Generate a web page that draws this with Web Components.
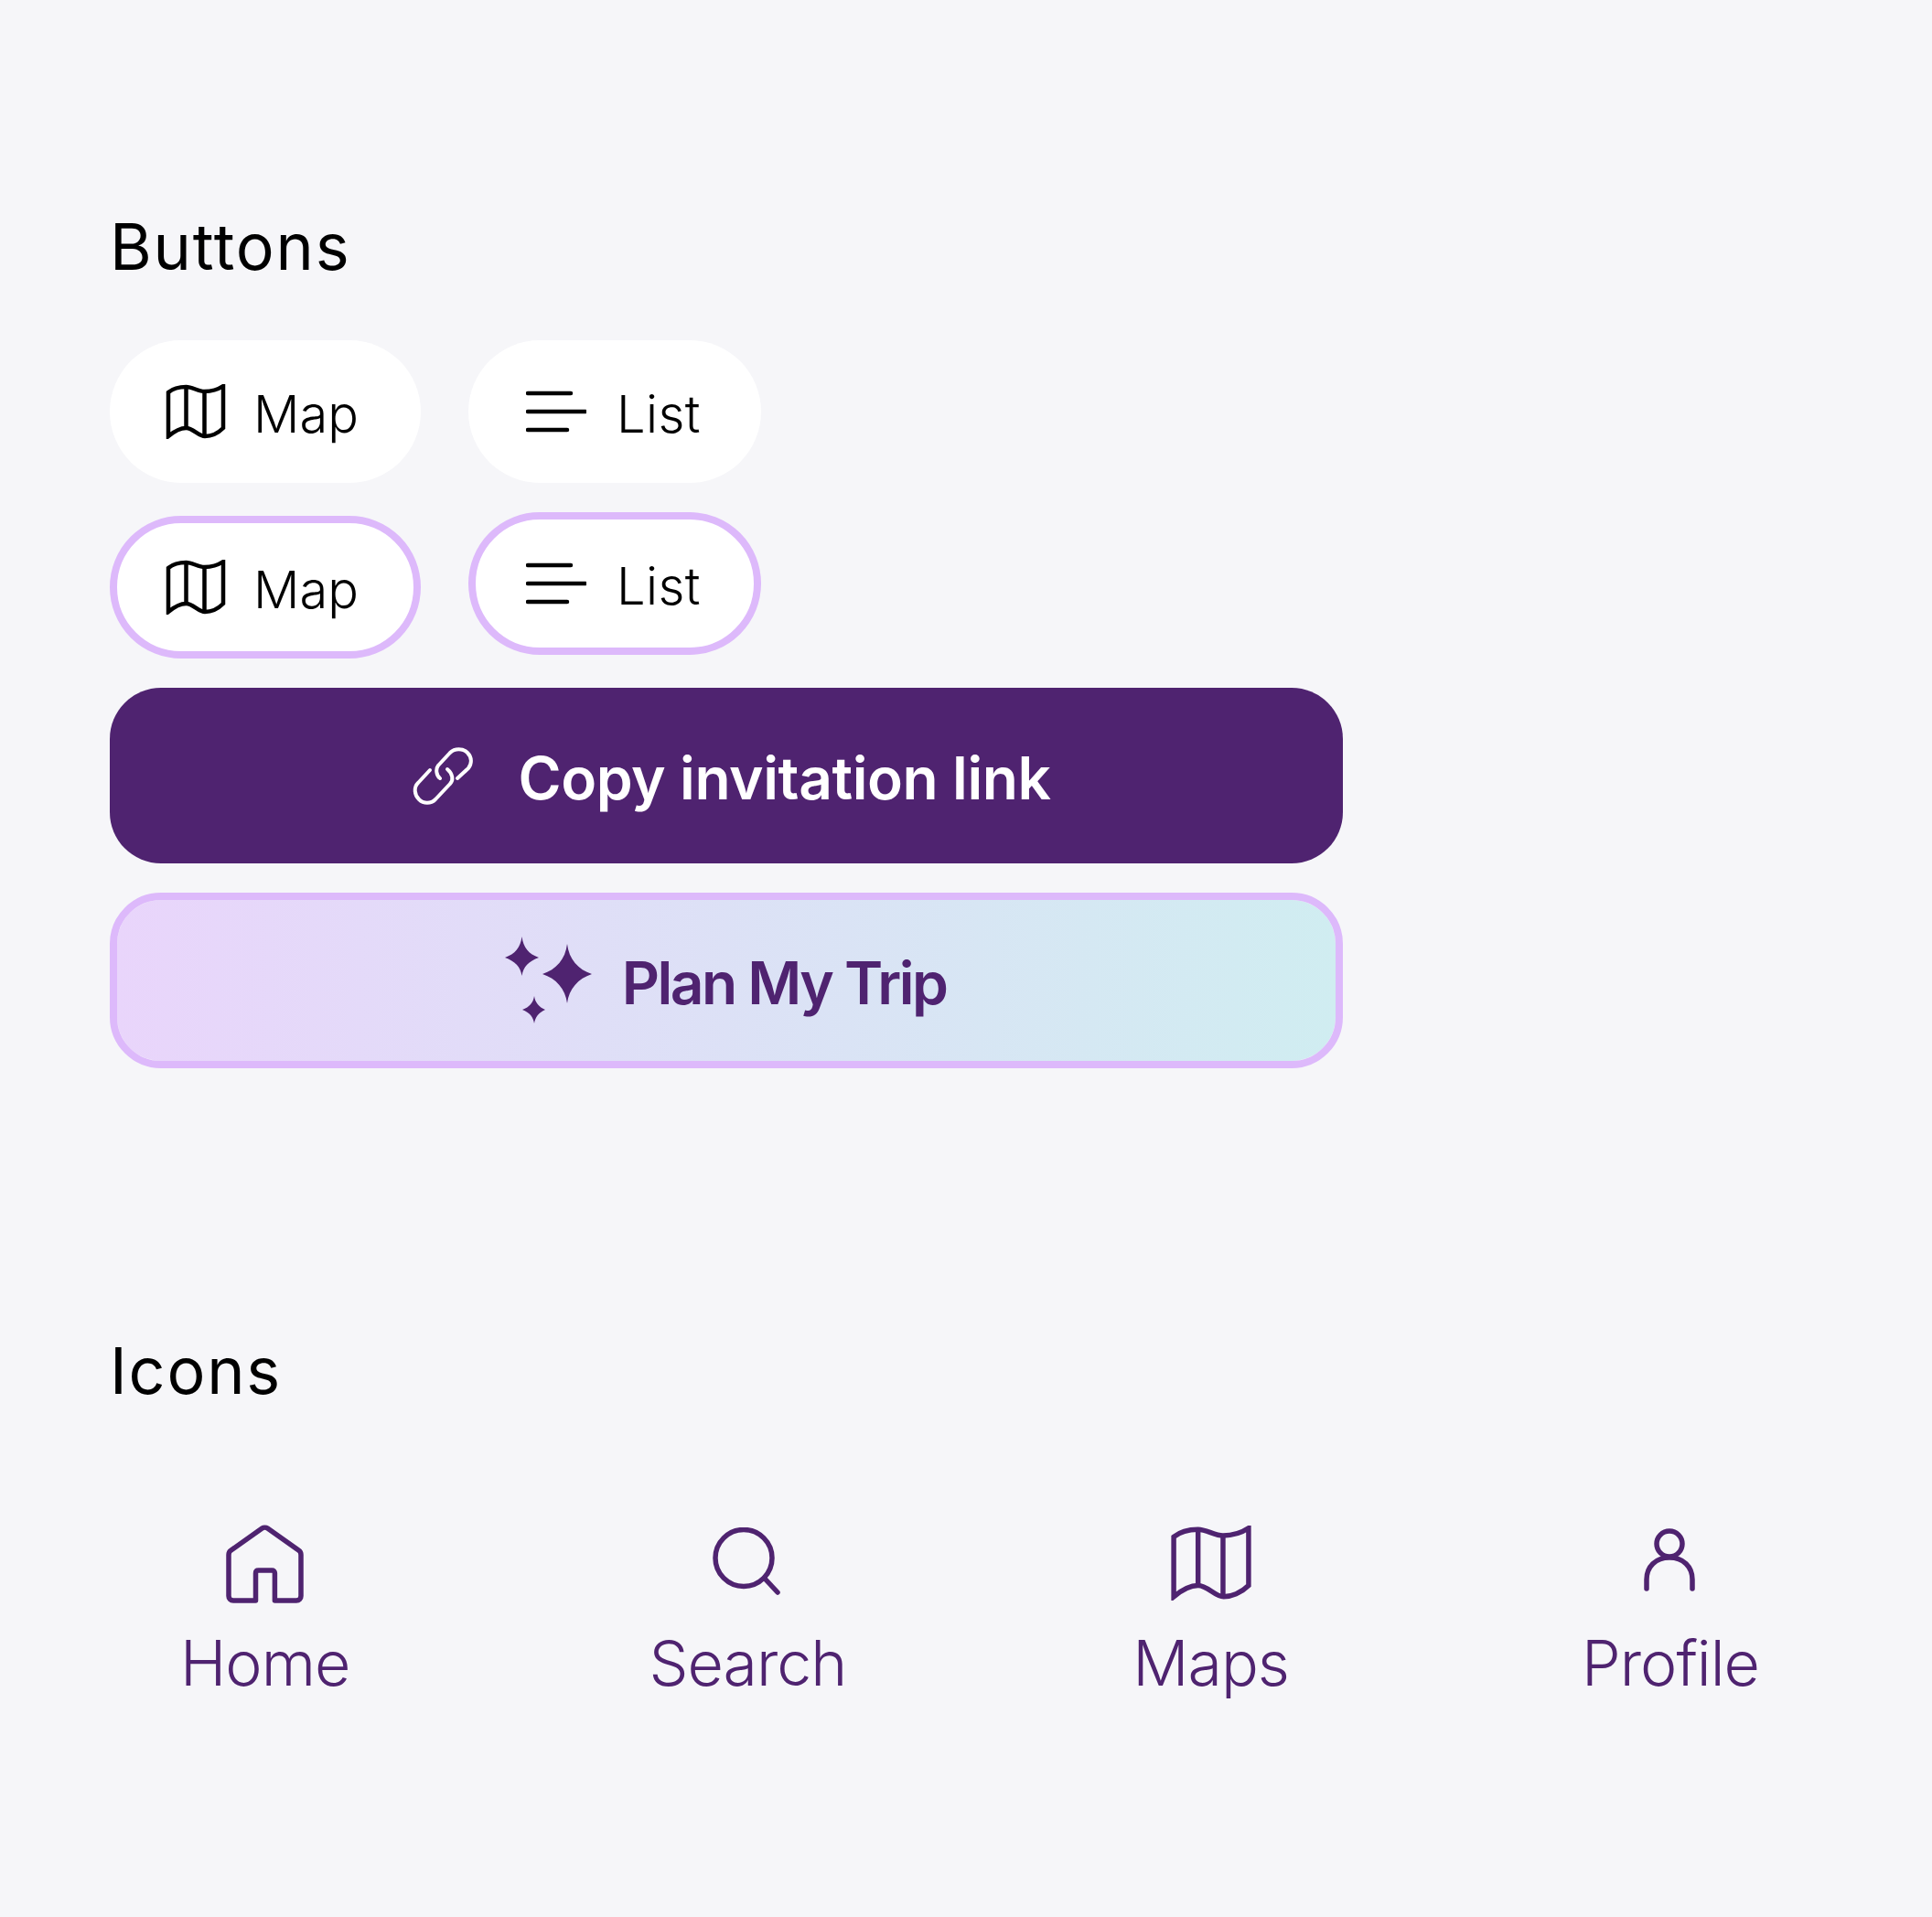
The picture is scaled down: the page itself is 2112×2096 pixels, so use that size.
<!DOCTYPE html>
<html><head><meta charset="utf-8"><title>Components</title>
<style>
html,body{margin:0;padding:0;background:#f6f6f9}
body{width:2112px;height:2096px;overflow:hidden;font-family:"Inter","Liberation Sans",sans-serif}
</style></head><body>
<ui-page>
  <ui-section style="--pt:235px;--mb:69px" heading="Buttons">
    <ui-row>
      <ui-pill w="340" pl="61" gap="30"><ui-icon slot="icon" name="map"></ui-icon>Map</ui-pill>
      <ui-pill w="320" gap="33" pl="63" ls=".4"><ui-icon slot="icon" name="list"></ui-icon>List</ui-pill>
    </ui-row>
    <ui-row>
      <ui-pill w="340" pl="61" gap="30" outlined style="margin-top:4px"><ui-icon slot="icon" name="map"></ui-icon>Map</ui-pill>
      <ui-pill w="320" gap="33" pl="63" ls=".4" outlined><ui-icon slot="icon" name="list"></ui-icon>List</ui-pill>
    </ui-row>
    <ui-cta kind="solid"><ui-icon slot="icon" name="link"></ui-icon>Copy invitation link</ui-cta>
    <ui-cta kind="magic"><ui-icon slot="icon" name="sparkles"></ui-icon>Plan My Trip</ui-cta>
  </ui-section>
  <ui-section style="--pt:296px;--mb:135px" heading="Icons">
    <ui-tabs>
      <ui-tab><ui-icon slot="icon" name="home"></ui-icon>Home</ui-tab>
      <ui-tab style="margin-left:7px;margin-right:-7px"><ui-icon slot="icon" name="search" style="margin-top:3px"></ui-icon>Search</ui-tab>
      <ui-tab><ui-icon slot="icon" name="bigmap" style="margin-top:1px"></ui-icon>Maps</ui-tab>
      <ui-tab><ui-icon slot="icon" name="profile" style="margin-top:4px"></ui-icon>Profile</ui-tab>
    </ui-tabs>
  </ui-section>
</ui-page>
<script>
const MAP='<path d="M14 29C20 24 27 23 33.5 23C40 23 47 28 53.5 28C60 28 68 26 74 22V68C68 74 60 77 54 77C47 77 41 68 33.5 68C26 68 20 72 14 77Z"/><path d="M33.5 23V68M53.5 28V77"/>';
const ICONS={
 map:{w:66,h:60,vb:'11 20 66 60',sw:4.5,miter:1,b:MAP},
 bigmap:{w:90,h:82,vb:'11 20 66 60',sw:4,miter:1,b:MAP},
 list:{w:66,h:48,vb:'0 0 66 48',sw:4.5,b:'<path d="M2 4H49M2 24H65M2 44H45"/>'},
 link:{w:80,h:70,vb:'20 24 80 70',sw:4,b:'<path d="M62 62C58 59 57 52 60 48L73 34C78 29 87 29 92 34C97 39 97 46 93 51L81 62"/><path d="M51 53L38 67C33 72 34 80 39 85C44 90 52 90 57 85L73 68C77 64 76 57 70 52"/>'},
 sparkles:{w:110,h:100,vb:'14 12 110 100',fill:1,b:'<path d="M88 22C90 39 100 50 115 55C100 60 90 71 88 87C86 71 76 60 61 55C76 50 86 39 88 22Z"/><path d="M38.500 14C40 26 46 33 57 37C46 41 40 47 38.500 57C37 47 31 41 20 37C31 33 37 26 38.500 14Z"/><path d="M52 79C53 86 57 91 64 94C57 97 53 102 52 109C51 102 47 97 39 94C47 91 51 86 52 79Z"/>'},
 home:{w:85,h:86,vb:'0 0 85 86',sw:5.5,b:'<path d="M32.500 83H8C5 83 3 81 3 78V33C3 31 4 29 5.600 28L39.500 4C41 3 44 3 45.500 4L79.400 28C81 29 82 31 82 33V78C82 81 80 83 77 83H53.400V53C53.400 51 52 50 50.400 50H35.500C33.500 50 32.500 51 32.500 53Z"/>'},
 search:{w:76,h:76,vb:'0 0 76 76',sw:5.5,b:'<circle cx="34" cy="33.500" r="31"/><path d="M58 57L71 71"/>'},
 profile:{w:60,h:70,vb:'0 0 60 70',sw:5.500,b:'<circle cx="29" cy="17" r="14"/><path d="M4 66V56C4 42 14 32 29 32C44 32 54 42 54 56V66"/>'}
};
class UiIcon extends HTMLElement{connectedCallback(){const i=ICONS[this.getAttribute('name')];const r=this.attachShadow({mode:'open'});
 r.innerHTML=`<style>:host{display:block;width:${i.w}px;height:${i.h}px;flex:none}svg{display:block}</style><svg xmlns="http://www.w3.org/2000/svg" width="${i.w}" height="${i.h}" viewBox="${i.vb}" fill="${i.fill?'currentColor':'none'}" ${i.fill?'':`stroke="currentColor" stroke-width="${i.sw}" stroke-linecap="${i.miter?'butt':'round'}" stroke-linejoin="${i.miter?'miter':'round'}"`}>${i.b}</svg>`;}}
class UiPage extends HTMLElement{constructor(){super();this.attachShadow({mode:'open'}).innerHTML=`<style>:host{display:block;padding:0 120px 0 120px;color:#000}</style><slot></slot>`;}}
class UiSection extends HTMLElement{connectedCallback(){this.attachShadow({mode:'open'}).innerHTML=`<style>:host{display:block;padding-top:var(--pt)}
 h2{margin:0 0 var(--mb);font:400 70px/1 "Inter",sans-serif;letter-spacing:1.800px;color:#000;height:68px}
 .b{display:flex;flex-direction:column;gap:32px}</style><h2>${this.getAttribute('heading')}</h2><div class="b"><slot></slot></div>`;}}
class UiRow extends HTMLElement{constructor(){super();this.attachShadow({mode:'open'}).innerHTML=`<style>:host{display:flex;gap:52px;align-items:flex-start}</style><slot></slot>`;}}
class UiPill extends HTMLElement{connectedCallback(){const w=this.getAttribute('w'),g=this.getAttribute('gap')||32,pl=+this.getAttribute('pl')||60,o=this.hasAttribute('outlined'),ls=this.getAttribute('ls')||0;
 this.attachShadow({mode:'open'}).innerHTML=`<style>:host{display:block;flex:none;width:${w}px;height:156px;box-sizing:border-box;border-radius:78px;background:#fff;${o?'border:8px solid #ddb9fb;':''}}
 ::slotted(ui-icon){margin-bottom:6px}
 .i{height:100%;box-sizing:border-box;display:flex;align-items:center;gap:${g}px;padding-top:6px;padding-left:${pl-(o?8:0)}px;font:350 56px/1 "Inter",sans-serif;letter-spacing:${ls}px;color:#000}</style><div class="i"><slot name="icon"></slot><slot></slot></div>`;}}
class UiCta extends HTMLElement{connectedCallback(){const k=this.getAttribute('kind');const s=k==='solid';
 this.attachShadow({mode:'open'}).innerHTML=`<style>:host{display:block;width:1348px;height:192px;box-sizing:border-box;border-radius:56px;${s?'background:#4f2370;color:#fff;':'background:linear-gradient(90deg,#e9d5fb,#d0edf1);background-clip:padding-box;color:#4f2370;'}}
 :host([kind=magic]){border:8px solid #ddb9fb}
 ::slotted(ui-icon){margin-bottom:6px}
 .i{height:100%;box-sizing:border-box;display:flex;align-items:center;justify-content:center;padding-top:6px;padding-right:${s?0:8}px;gap:${s?47:24}px;font:600 64px/1 "Inter",sans-serif;letter-spacing:${s?-.4:-2.5}px}</style><div class="i"><slot name="icon"></slot><slot></slot></div>`;}}
class UiTabs extends HTMLElement{constructor(){super();this.attachShadow({mode:'open'}).innerHTML=`<style>:host{display:flex;justify-content:space-between;padding:0 69px 0 77px}</style><slot></slot>`;}}
class UiTab extends HTMLElement{constructor(){super();this.attachShadow({mode:'open'}).innerHTML=`<style>:host{display:flex;flex-direction:column;align-items:center;color:#4f2370;font:350 68px/1 "Inter",sans-serif;letter-spacing:-1px}
 .ic{height:90px;display:flex;align-items:flex-start;justify-content:center;margin-bottom:27px}</style><div class="ic"><slot name="icon"></slot></div><slot></slot>`;}}
customElements.define('ui-icon',UiIcon);customElements.define('ui-page',UiPage);customElements.define('ui-section',UiSection);customElements.define('ui-row',UiRow);customElements.define('ui-pill',UiPill);customElements.define('ui-cta',UiCta);customElements.define('ui-tabs',UiTabs);customElements.define('ui-tab',UiTab);
</script>
</body></html>
